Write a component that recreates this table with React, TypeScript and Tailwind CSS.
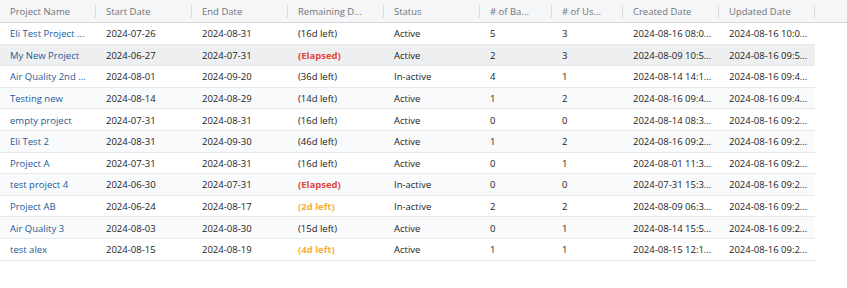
const columns = [
  { label: 'Project Name', w: 'w-[96px]' },
  { label: 'Start Date', w: 'w-[96px]' },
  { label: 'End Date', w: 'w-[96px]' },
  { label: 'Remaining D...', w: 'w-[96px]' },
  { label: 'Status', w: 'w-[96px]' },
  { label: '# of Ba...', w: 'w-[72px]' },
  { label: '# of Us...', w: 'w-[71px]' },
  { label: 'Created Date', w: 'w-[96px]' },
  { label: 'Updated Date', w: 'w-[96px]' },
];

type Tone = 'normal' | 'red' | 'orange';

interface Row {
  name: string;
  start: string;
  end: string;
  remaining: string;
  tone: Tone;
  status: string;
  bases: number;
  users: number;
  created: string;
  updated: string;
}

const rows: Row[] = [
  { name: 'Eli Test Project ...', start: '2024-07-26', end: '2024-08-31', remaining: '(16d left)', tone: 'normal', status: 'Active', bases: 5, users: 3, created: '2024-08-16 08:0...', updated: '2024-08-16 10:0...' },
  { name: 'My New Project', start: '2024-06-27', end: '2024-07-31', remaining: '(Elapsed)', tone: 'red', status: 'Active', bases: 2, users: 3, created: '2024-08-09 10:5...', updated: '2024-08-16 09:5...' },
  { name: 'Air Quality 2nd ...', start: '2024-08-01', end: '2024-09-20', remaining: '(36d left)', tone: 'normal', status: 'In-active', bases: 4, users: 1, created: '2024-08-14 14:1...', updated: '2024-08-16 09:4...' },
  { name: 'Testing new', start: '2024-08-14', end: '2024-08-29', remaining: '(14d left)', tone: 'normal', status: 'Active', bases: 1, users: 2, created: '2024-08-16 09:4...', updated: '2024-08-16 09:4...' },
  { name: 'empty project', start: '2024-07-31', end: '2024-08-31', remaining: '(16d left)', tone: 'normal', status: 'Active', bases: 0, users: 0, created: '2024-08-14 08:3...', updated: '2024-08-16 09:2...' },
  { name: 'Eli Test 2', start: '2024-08-31', end: '2024-09-30', remaining: '(46d left)', tone: 'normal', status: 'Active', bases: 1, users: 2, created: '2024-08-16 09:2...', updated: '2024-08-16 09:2...' },
  { name: 'Project A', start: '2024-07-31', end: '2024-08-31', remaining: '(16d left)', tone: 'normal', status: 'Active', bases: 0, users: 1, created: '2024-08-01 11:3...', updated: '2024-08-16 09:2...' },
  { name: 'test project 4', start: '2024-06-30', end: '2024-07-31', remaining: '(Elapsed)', tone: 'red', status: 'In-active', bases: 0, users: 0, created: '2024-07-31 15:3...', updated: '2024-08-16 09:2...' },
  { name: 'Project AB', start: '2024-06-24', end: '2024-08-17', remaining: '(2d left)', tone: 'orange', status: 'In-active', bases: 2, users: 2, created: '2024-08-09 06:3...', updated: '2024-08-16 09:2...' },
  { name: 'Air Quality 3', start: '2024-08-03', end: '2024-08-30', remaining: '(15d left)', tone: 'normal', status: 'Active', bases: 0, users: 1, created: '2024-08-14 15:5...', updated: '2024-08-16 09:2...' },
  { name: 'test alex', start: '2024-08-15', end: '2024-08-19', remaining: '(4d left)', tone: 'orange', status: 'Active', bases: 1, users: 1, created: '2024-08-15 12:1...', updated: '2024-08-16 09:2...' },
];

const toneClass: Record<Tone, string> = {
  normal: 'text-[#222]',
  red: 'text-[#e0463c] font-bold',
  orange: 'text-[#f6b03c] font-bold',
};

function Cell({ w, children, className = '' }: { w: string; children: React.ReactNode; className?: string }) {
  return <div className={`${w} shrink-0 overflow-hidden whitespace-nowrap pl-[10px] ${className}`}>{children}</div>;
}

export default function App() {
  return (
    <div className="w-[847px] h-[288px] bg-white font-['Open_Sans',sans-serif] text-[9.5px] text-[#222]">
      <div className="flex h-[23px] items-center pt-[2px] bg-[#f5f6f8] border-b border-[#d2d5d9]">
        {columns.map((c) => (
          <div key={c.label} className={`${c.w} shrink-0 flex items-center justify-between pl-[10px] text-[#6f7378]`}>
            <span className="whitespace-nowrap overflow-hidden">{c.label}</span>
            <span className="w-px h-[13px] -mt-[2px] bg-[#d9dcdf]" />
          </div>
        ))}
      </div>
      <div className="w-[815px]">
        {rows.map((r, i) => (
          <div
            key={r.name}
            className={`flex h-[21.6px] items-center pt-[2px] border-b border-[#e6e8ea] ${
              i === 1 ? 'bg-[#edeff0]' : i % 2 === 1 ? 'bg-[#f9fafc]' : 'bg-white'
            }`}
          >
            <Cell w="w-[96px]" className="text-[#1d5a98]">{r.name}</Cell>
            <Cell w="w-[96px]">{r.start}</Cell>
            <Cell w="w-[96px]">{r.end}</Cell>
            <Cell w="w-[96px]" className={toneClass[r.tone]}>{r.remaining}</Cell>
            <Cell w="w-[96px]">{r.status}</Cell>
            <Cell w="w-[72px]">{r.bases}</Cell>
            <Cell w="w-[71px]">{r.users}</Cell>
            <Cell w="w-[96px]">{r.created}</Cell>
            <Cell w="w-[96px]">{r.updated}</Cell>
          </div>
        ))}
      </div>
    </div>
  );
}
